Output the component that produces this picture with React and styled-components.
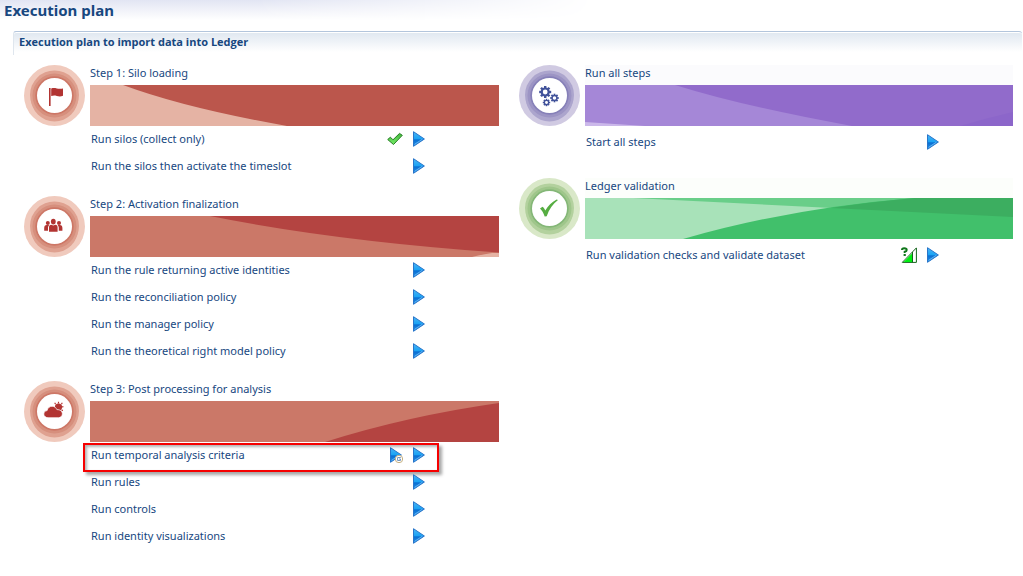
import React from "react";
import styled, { createGlobalStyle, css } from "styled-components";

const GlobalStyle = createGlobalStyle`
  *, *::before, *::after { box-sizing: border-box; }
  body {
    margin: 0;
    background: #fff;
    color: #17477f;
    font-family: "Noto Sans", "Open Sans", sans-serif;
    font-size: 11px;
    line-height: 16px;
  }
`;

const Page = styled.main`
  position: relative;
  padding-bottom: 20px;
  &::before {
    content: "";
    position: absolute;
    z-index: -1;
    inset: 0 0 auto 0;
    height: 20px;
    background: linear-gradient(to bottom, #e2e5f3, #fff);
    mask-image: linear-gradient(to right, #000 25%, transparent 58%);
  }
`;

const PageTitle = styled.h1`
  margin: 0;
  padding: 0 4px;
  height: 31px;
  font-size: 15px;
  line-height: 21px;
  font-weight: 700;
`;

const Panel = styled.section`
  margin: 0 1px 0 13px;
`;

const PanelTitle = styled.h2`
  margin: 0;
  height: 24px;
  padding: 2px 5px 0;
  border-top: 1px solid #b3c5dc;
  border-left: 1px solid #dfe6ee;
  border-radius: 3px 3px 0 0;
  box-shadow: inset 0 1px #fff;
  background: linear-gradient(to bottom, #dfe7f0, #fff 20px);
  font-family: "Open Sans", "Noto Sans", sans-serif;
  font-size: 11px;
  line-height: 15px;
  font-weight: 700;
`;

const Columns = styled.div`
  display: grid;
  grid-template-columns: minmax(0, 475fr) minmax(0, 494fr);
  gap: 20px;
  padding: 10px 9px 0 11px;
`;

const Column = styled.div`
  display: flex;
  flex-direction: column;
  gap: ${(p) => (p.$spacious ? 20 : 16)}px;
`;

const Step = styled.section`
  display: grid;
  grid-template-columns: 61px minmax(0, 1fr);
  column-gap: 5px;
`;

const StepTitle = styled.h3`
  margin: 0;
  height: 20px;
  font-size: 11px;
  line-height: 15px;
  font-weight: 400;
  background: ${(p) => p.$tint || "transparent"};
`;

const Banner = styled.svg`
  display: block;
  width: 100%;
  height: 41px;
`;

const Badge = styled.svg`
  display: block;
  width: 61px;
  height: 61px;
`;

const TaskList = styled.ul`
  list-style: none;
  margin: 0;
  padding: 0;
`;

const Task = styled.li`
  position: relative;
  display: flex;
  align-items: center;
  gap: 10px;
  height: ${(p) => (p.$tall ? 32 : 27)}px;
  padding: 0 74px ${(p) => (p.$tall ? 0 : 1)}px 1px;
  ${(p) =>
    p.$highlighted &&
    css`
      &::after {
        content: "";
        position: absolute;
        inset: 1px 60px -3px -7px;
        border: 2px solid #f60000;
        box-shadow: 3px 3px 3px rgba(0, 0, 0, 0.35), inset 2px 2px 3px rgba(0, 0, 0, 0.3);
        pointer-events: none;
      }
    `}
`;

const TaskName = styled.span`
  flex: 1;
  white-space: nowrap;
`;

const IconButton = styled.button`
  display: block;
  padding: 0;
  border: 0;
  background: none;
  cursor: pointer;
  svg { display: block; }
`;

const palettes = {
  red: ["#f0cabd", "#dfa190", "#d68f7d", "#cd7766", "#b23432"],
  purple: ["#d0cae2", "#aca5cd", "#9c94c4", "#8680b8", "#41529a"],
  green: ["#d9e8c8", "#b3d19e", "#9fc68b", "#84b777", "#56ad42"],
};

function Gear({ x, y, r, teeth }) {
  return (
    <g transform={`translate(${x} ${y})`}>
      {Array.from({ length: teeth }, (_, i) => (
        <rect
          key={i}
          x={-r * 0.2}
          y={-r}
          width={r * 0.4}
          height={r * 0.4}
          transform={`rotate(${(360 / teeth) * i})`}
        />
      ))}
      <circle r={r * 0.58} fill="none" stroke="currentColor" strokeWidth={r * 0.36} />
    </g>
  );
}

const symbols = {
  flag: (
    <>
      <rect x="25" y="23" width="1.6" height="18" />
      <path d="M27.2 23.4c2-.6 3.7-.5 5.6 0s3.800.6 6.200 0v7.400c-2.400.9-4.300.7-6.200.1s-3.600-.6-5.600.1z" />
    </>
  ),
  users: (
    <>
      <circle cx="23.800" cy="27" r="2" />
      <circle cx="35" cy="27" r="2" />
      <path d="M20.200 34.700v-2.700c0-1.800.9-3 2.500-3h2.500c-.9 1-1.200 2-1.200 3v2.700zM38.400 34.700v-2.700c0-1.800-.9-3-2.500-3h-2.300c.9 1 1.200 2 1.200 3v2.700z" />
      <ellipse cx="29.300" cy="25.600" rx="2.400" ry="2.900" />
      <path d="M25 35.800v-4.600c0-1.500.8-2.300 2.200-2.500l2.100.9 2.100-.9c1.400.2 2.200 1 2.200 2.500v4.600z" />
    </>
  ),
  weather: (
    <>
      <circle cx="34.500" cy="26" r="3.600" />
      <path
        d="M34.500 20.800v1.600M30.700 21.800l.9 1.400M38.300 21.800l-.9 1.400M37.700 26l1.700-.3M37.600 28.800l1.200.9"
        stroke="currentColor"
        strokeWidth="1.200"
      />
      <path
        d="M24 36.700c-2.300 0-4.200-1.500-4.200-3.600 0-2 1.400-3.300 3.300-3.500.4-2.600 2.500-4.300 5-4.300 2.300 0 4 1.300 4.800 3.300 3-.2 5.500 1.400 5.500 4.200 0 2.200-1.700 3.900-4 3.900z"
        stroke="#fff"
        strokeWidth=".7"
      />
    </>
  ),
  gears: (
    <>
      <Gear x={26.200} y={27} r={6} teeth={8} />
      <Gear x={35.500} y={33} r={4.300} teeth={8} />
      <Gear x={27.500} y={37.500} r={3.700} teeth={8} />
    </>
  ),
  check: (
    <path d="M21 30.500l2.500-1.700c1.400 1 2.200 2.200 2.800 3.800 2.700-4.700 6.300-8.600 11.300-11.100l1.400.6c-5.200 4.100-8.900 9.300-11.300 16.200l-2 .2c-1.100-3.300-2.500-5.900-4.700-8z" />
  ),
};

function StepBadge({ tone, symbol }) {
  const [outer, middle, inner, rim, ink] = palettes[tone];
  return (
    <Badge viewBox="0 0 61 61" aria-hidden="true">
      <circle cx="30.500" cy="30.500" r="30.500" fill={outer} />
      <circle cx="30.500" cy="30" r="24.500" fill={middle} />
      <circle cx="30.500" cy="33" r="23.500" fill={middle} />
      <circle cx="30.500" cy="30.500" r="22" fill={inner} />
      <circle cx="30.500" cy="30.500" r="19.200" fill={rim} />
      <circle cx="30.500" cy="30.500" r="17.500" fill="#fff" />
      <g fill={ink} color={ink}>{symbols[symbol]}</g>
    </Badge>
  );
}

const banners = {
  loading: {
    width: 409,
    base: "#bb564c",
    shapes: [["#e5b3a4", "M0 0H33Q95 23 197 41H0z"]],
  },
  activation: {
    width: 409,
    base: "#cb7868",
    shapes: [
      ["#b44441", "M120 0Q245 25 409 36.500V0z"],
      ["#e5b3a4", "M382 41Q394 38 402 37H409V41z"],
    ],
  },
  analysis: {
    width: 409,
    base: "#cb7868",
    shapes: [["#b44441", "M235 41Q317 15 409 2V41z"]],
  },
  all: {
    width: 428,
    base: "#916bcb",
    shapes: [
      ["#a587d7", "M0 0H90Q157 21 267 41H0z"],
      ["#cbb8ea", "M0 37L60 41H0z"],
      ["#8c66ca", "M375 41Q402 33 428 27V41z"],
    ],
  },
  validation: {
    width: 428,
    base: "#a8e2b9",
    shapes: [
      ["#69ce89", "M48 0L428 19V0z"],
      ["#41c06b", "M98 41Q205 10 330 0H428V41z"],
      ["#3cae60", "M246 10Q285 4 330 0H428V19z"],
    ],
  },
};

function StepBanner({ name }) {
  const { width, base, shapes } = banners[name];
  return (
    <Banner viewBox={`0 0 ${width} 41`} preserveAspectRatio="none" aria-hidden="true">
      <rect width={width} height="41" fill={base} />
      {shapes.map(([fill, d]) => (
        <path key={d} fill={fill} d={d} />
      ))}
    </Banner>
  );
}

function PlayShape() {
  return (
    <>
      <path d="M.5.7V15.300L11.400 8z" fill="url(#playFill)" stroke="#2875c9" strokeLinejoin="round" />
      <path d="M1.500 13.400L9.600 8" fill="none" stroke="#60b4f2" strokeWidth="1" />
    </>
  );
}

function PlayIcon() {
  return (
    <svg width="12" height="16" viewBox="0 0 12 16" aria-hidden="true">
      <PlayShape />
    </svg>
  );
}

const statusIcons = {
  done: {
    label: "Completed",
    art: (
      <path
        d="M.7 8.500L3.400 6.200 6 8.800 12.500 2.400 15.300 4.300 6.500 13.500z"
        fill="url(#doneFill)"
        stroke="#257d23"
        strokeLinejoin="round"
      />
    ),
  },
  partial: {
    label: "Run on the current group",
    art: (
      <>
        <g transform="translate(3 0)"><PlayShape /></g>
        <circle cx="12" cy="12" r="3.700" fill="#fff" stroke="#c4ae7e" />
        <path d="M13.800 10.500H10.600V13.500H13.500V12H12" fill="none" stroke="#7897bd" />
      </>
    ),
  },
  unknown: {
    label: "Validation level unknown",
    art: (
      <>
        <path d="M1.300 15.400L15.400.9V15.400z" fill="#fff" stroke="#14641b" />
        <path d="M2.600 14.900L11.500 5.900V14.900z" fill="#00ef12" />
        <path d="M11.500 5V15.400" stroke="#14641b" />
        <path d="M1 3Q1 1.200 3.200 1.200Q5.700 1.200 5.700 3Q5.700 4.200 3.700 4.800V6" fill="none" stroke="#11771c" strokeWidth="2" />
        <rect x="2.600" y="7" width="2.200" height="2" fill="#11771c" />
      </>
    ),
  },
};

function StatusIcon({ status }) {
  const { label, art } = statusIcons[status];
  return (
    <IconButton type="button" aria-label={label}>
      <svg width="16" height="16" viewBox="0 0 16 16" aria-hidden="true">{art}</svg>
    </IconButton>
  );
}

const GradientDefs = styled.svg`
  display: block;
`;

function IconGradients() {
  return (
    <GradientDefs width="0" height="0" aria-hidden="true">
      <defs>
        <linearGradient id="playFill" x1="0" y1="0" x2="0" y2="1">
          <stop offset="0" stopColor="#4cb4f4" />
          <stop offset=".5" stopColor="#18a2f4" />
          <stop offset=".55" stopColor="#096ed2" />
          <stop offset="1" stopColor="#2491ea" />
        </linearGradient>
        <linearGradient id="doneFill" x1="0" y1="0" x2="0" y2="1">
          <stop offset="0" stopColor="#42b53d" />
          <stop offset="1" stopColor="#78ee69" />
        </linearGradient>
      </defs>
    </GradientDefs>
  );
}

const leftSteps = [
  {
    title: "Step 1: Silo loading",
    symbol: "flag",
    banner: "loading",
    tasks: [
      { name: "Run silos (collect only)", status: "done" },
      { name: "Run the silos then activate the timeslot" },
    ],
  },
  {
    title: "Step 2: Activation finalization",
    symbol: "users",
    banner: "activation",
    tasks: [
      { name: "Run the rule returning active identities" },
      { name: "Run the reconciliation policy" },
      { name: "Run the manager policy" },
      { name: "Run the theoretical right model policy" },
    ],
  },
  {
    title: "Step 3: Post processing for analysis",
    symbol: "weather",
    banner: "analysis",
    tasks: [
      { name: "Run temporal analysis criteria", status: "partial", highlighted: true },
      { name: "Run rules" },
      { name: "Run controls" },
      { name: "Run identity visualizations" },
    ],
  },
];

const rightSteps = [
  {
    title: "Run all steps",
    tone: "purple",
    tint: "#fbfbfd",
    symbol: "gears",
    banner: "all",
    tasks: [{ name: "Start all steps" }],
  },
  {
    title: "Ledger validation",
    tone: "green",
    tint: "#fcfefb",
    symbol: "check",
    banner: "validation",
    tasks: [{ name: "Run validation checks and validate dataset", status: "unknown" }],
  },
];

function StepBlock({ title, tone = "red", tint, symbol, banner, tasks, tall }) {
  return (
    <Step>
      <StepBadge tone={tone} symbol={symbol} />
      <div>
        <StepTitle $tint={tint}>{title}</StepTitle>
        <StepBanner name={banner} />
        <TaskList>
          {tasks.map(({ name, status, highlighted }) => (
            <Task key={name} $tall={tall} $highlighted={highlighted}>
              <TaskName>{name}</TaskName>
              {status && <StatusIcon status={status} />}
              <IconButton type="button" aria-label={`Start: ${name}`}>
                <PlayIcon />
              </IconButton>
            </Task>
          ))}
        </TaskList>
      </div>
    </Step>
  );
}

export default function App() {
  return (
    <>
      <GlobalStyle />
      <IconGradients />
      <Page>
        <PageTitle>Execution plan</PageTitle>
        <Panel>
          <PanelTitle>Execution plan to import data into Ledger</PanelTitle>
          <Columns>
            <Column>
              {leftSteps.map((step) => (
                <StepBlock key={step.title} {...step} />
              ))}
            </Column>
            <Column $spacious>
              {rightSteps.map((step) => (
                <StepBlock key={step.title} {...step} tall />
              ))}
            </Column>
          </Columns>
        </Panel>
      </Page>
    </>
  );
}
